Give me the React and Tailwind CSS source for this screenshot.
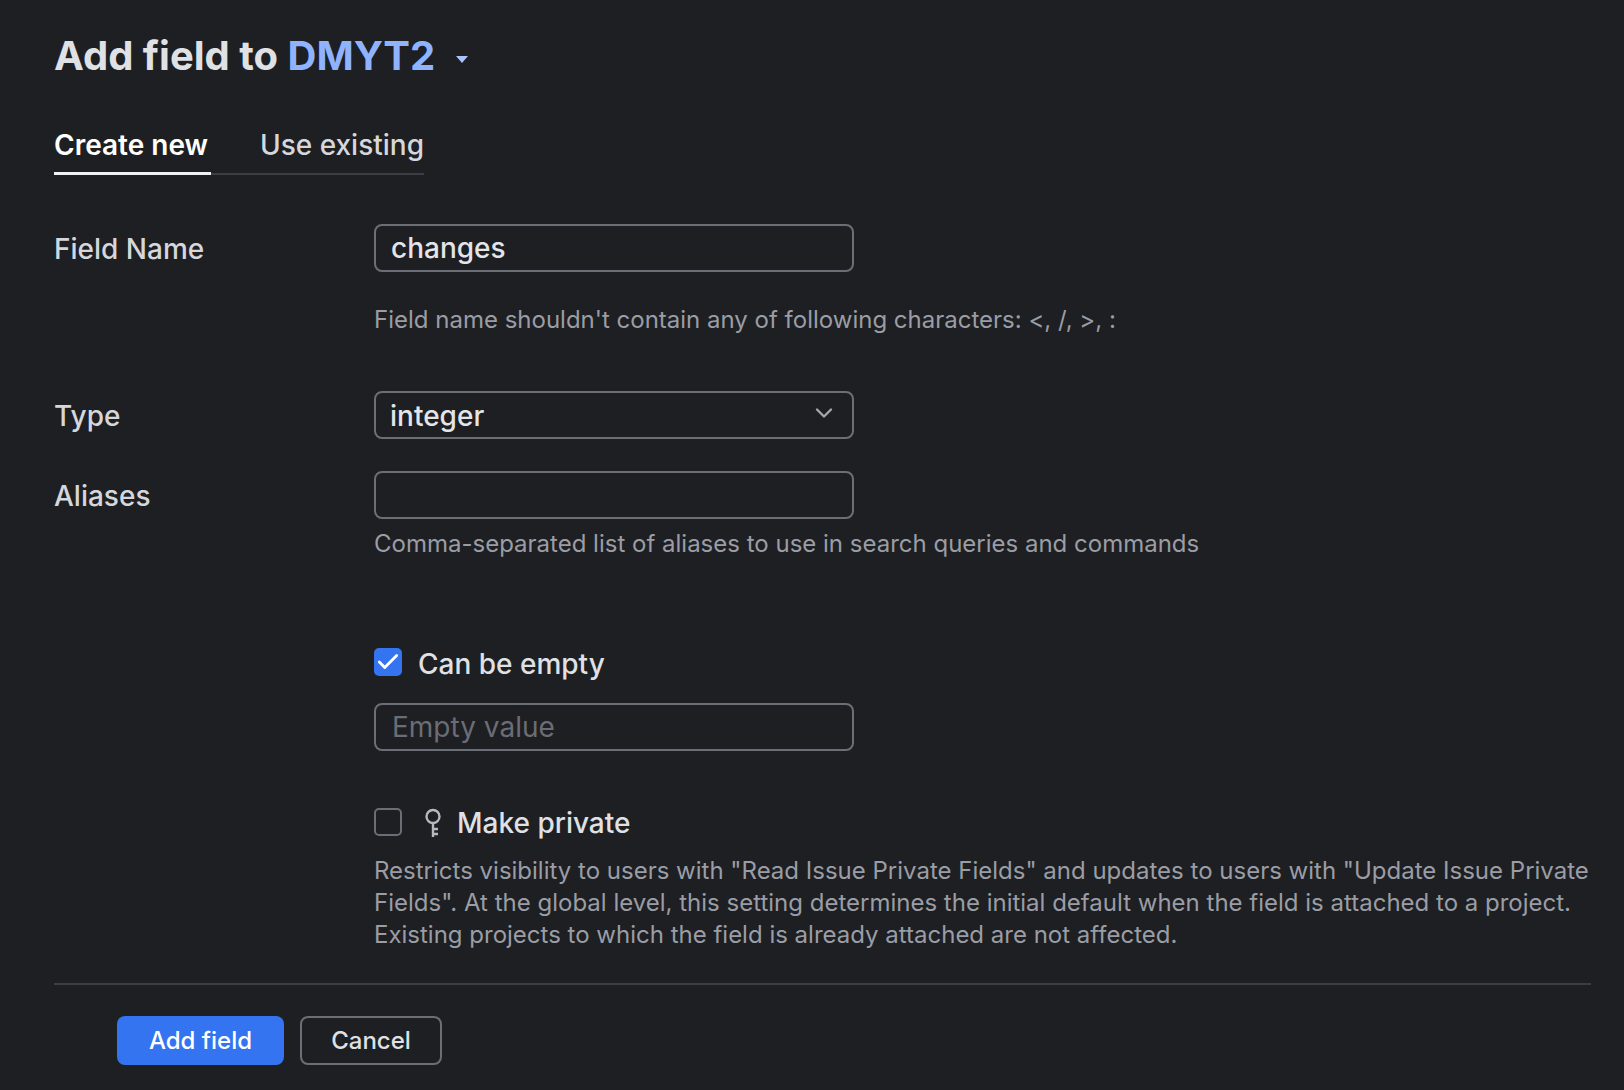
import { ChevronDown, Check } from 'lucide-react';

const boxClass = 'w-[480px] h-[48px] rounded-[8px] border-2 border-[#6b6e76] flex items-center';

const KeyIcon = () => (
  <svg width="20" height="30" viewBox="0 0 20 30" fill="none" stroke="#b5b8bf" strokeWidth="2.4">
    <circle cx="10" cy="8.5" r="6.5" />
    <path d="M10 15v14M10 21h5M10 26h5" />
  </svg>
);

const Row = ({ label, className, children }) => (
  <div className={`flex ${className}`}>
    <div className="w-[320px] shrink-0 h-[48px] pt-[2px] flex items-center text-[#d5d7dc]">{label}</div>
    <div>{children}</div>
  </div>
);

export default function App() {
  return (
    <div className="w-[1624px] h-[1090px] overflow-hidden bg-[#1e1f22] pl-[54px] pr-[33px] pt-[30px] text-[28px] leading-[32px] font-medium font-['Inter',sans-serif] text-[#dfe1e5]">
      {/* Title */}
      <div className="flex items-center h-[52px]">
        <h1 className="text-[40px] leading-[52px] font-bold text-[#dfe1e5]">
          Add field to <span className="text-[#8fb3ff]">DMYT2</span>
        </h1>
        <svg className="ml-[20px] mt-[6px]" width="14" height="9" viewBox="0 0 14 9">
          <path d="M1 1h12L7 8z" fill="#a9c2fb" />
        </svg>
      </div>

      {/* Tabs */}
      <div className="mt-[43px] flex w-[370px] border-b-2 border-[#3c3e44] h-[50px]">
        <div className="h-[50px] w-[157px] border-b-[3px] border-[#f0f1f3] -mb-[2px] font-semibold text-white leading-[40px] whitespace-nowrap">Create new</div>
        <div className="ml-[49px] text-[#d5d7dc] leading-[40px] whitespace-nowrap">Use existing</div>
      </div>

      {/* Form */}
      <Row label="Field Name" className="mt-[49px]">
        <div className={`${boxClass} pl-[15px] text-[#e3e5e9]`}>changes</div>
        <p className="mt-[32px] text-[24px] leading-[32px] font-normal text-[#9a9da5]">
          Field name shouldn't contain any of following characters: &lt;, /, &gt;, :
        </p>
      </Row>

      <Row label="Type" className="mt-[55px]">
        <div className={`${boxClass} pl-[14px] pr-[14px] pt-[2px] justify-between text-[#e3e5e9]`}>
          integer
          <ChevronDown className="w-[28px] h-[28px] -mt-[6px] text-[#a5a8af]" strokeWidth={2} />
        </div>
      </Row>

      <Row label="Aliases" className="mt-[32px]">
        <div className={boxClass} />
        <p className="mt-[9px] text-[24px] leading-[32px] font-normal text-[#9a9da5]">
          Comma-separated list of aliases to use in search queries and commands
        </p>
      </Row>

      <div className="ml-[320px] mt-[88px]">
        <div className="flex items-center gap-[16px] h-[32px]">
          <div className="w-[28px] h-[28px] -mt-[5px] rounded-[5px] bg-[#3574f0] flex items-center justify-center">
            <Check className="w-[26px] h-[26px] text-white" strokeWidth={2.6} />
          </div>
          <span className="text-[#dfe1e5]">Can be empty</span>
        </div>
        <div className={`${boxClass} mt-[23px] pl-[16px] font-normal text-[#6a6d75]`}>Empty value</div>
        <div className="mt-[56px] flex items-center h-[32px]">
          <div className="w-[28px] h-[28px] -mt-[2px] rounded-[5px] border-2 border-[#6b6e76]" />
          <span className="ml-[21px] flex"><KeyIcon /></span>
          <span className="ml-[14px] text-[#dfe1e5]">Make private</span>
        </div>
        <p className="mt-[16px] text-[24px] leading-[32px] font-normal text-[#9a9da5] whitespace-nowrap">
          Restricts visibility to users with "Read Issue Private Fields" and updates to users with "Update Issue Private<br />
          Fields". At the global level, this setting determines the initial default when the field is attached to a project.<br />
          Existing projects to which the field is already attached are not affected.
        </p>
      </div>

      {/* Footer */}
      <div className="mt-[32px] border-t-2 border-[#3c3e44] pl-[63px] pt-[31px] flex gap-[16px]">
        <button className="w-[167px] h-[49px] rounded-[8px] bg-[#3574f0] text-white text-[24px]">Add field</button>
        <button className="w-[142px] h-[49px] rounded-[8px] border-2 border-[#6b6e76] text-[#dfe1e5] text-[24px]">Cancel</button>
      </div>
    </div>
  );
}
